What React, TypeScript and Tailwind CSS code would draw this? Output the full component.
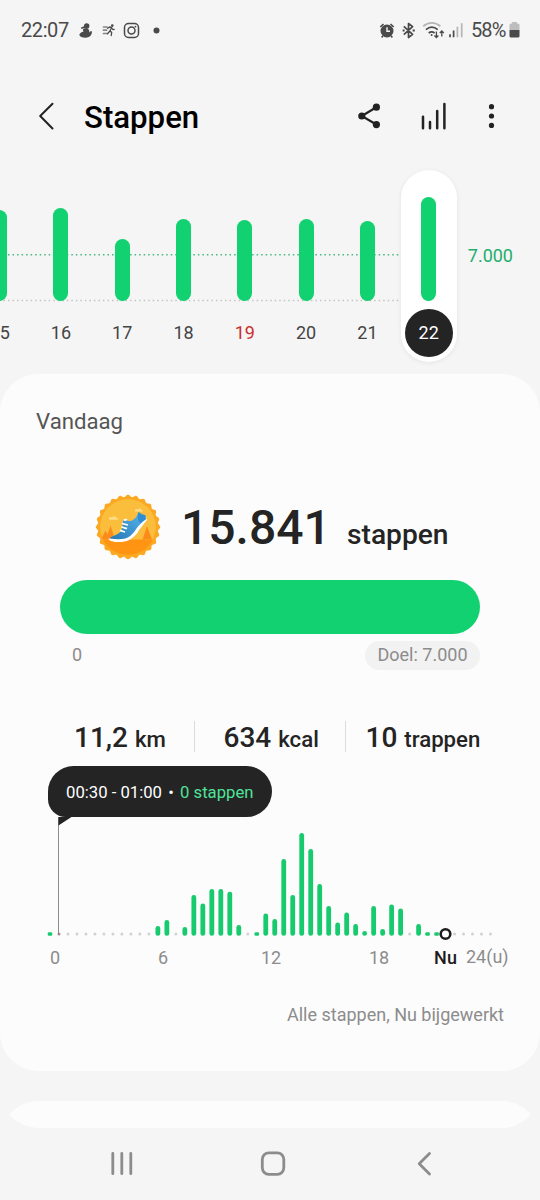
import React from "react";

const days = [
  { d: "15", top: 210 },
  { d: "16", top: 208 },
  { d: "17", top: 238.5 },
  { d: "18", top: 218.5 },
  { d: "19", top: 220, red: true },
  { d: "20", top: 218.5 },
  { d: "21", top: 221 },
  { d: "22", top: 197, active: true },
];

const BASE = 935.8;
const halfHours: Record<number, number> = {
  12: 926, 13: 920, 15: 927, 16: 895, 17: 903.5, 18: 889, 19: 889, 20: 891.7, 21: 925,
  24: 913.5, 25: 919, 26: 859, 27: 895, 28: 833, 29: 849, 30: 884, 31: 906, 32: 922.5,
  33: 912.5, 34: 924, 35: 931, 36: 906, 37: 929, 38: 904.5, 39: 908.5, 41: 924,
};
const tiny = [0, 23, 42, 43];

function StatusBar() {
  return (
    <div className="flex h-[60px] shrink-0 items-center justify-between pl-[21px] pr-5 text-[20px] text-[#4a4a4a]">
      <div className="flex items-center">
        <span className="w-[53px] tracking-[-0.4px]">22:07</span>
        <svg width="90" height="28" viewBox="74 16 90 28" fill="#4a4a4a">
          <circle cx="86.7" cy="26" r="2.7" />
          <path d="M80.800 27.800l3.600-1.900 1.400 1.600-4.300 1.500z" />
          <path d="M83.800 28.600c3.600-1 5.800.6 5.600 3.900l1.400-1.600 1.200.7c-.2 4.200-2.800 6.100-6.400 6.100-3.600 0-5.900-1-6.300-2.900.5-1.600 2-2.400 4.300-3.200-.9-1.200-.9-2.200.2-3z" />
          <g stroke="#4a4a4a" fill="none" strokeWidth="1.300" strokeLinecap="round" strokeLinejoin="round">
            <path d="M103.500 27h3.500M103.500 30.200h3M103.500 33.500h3.500" strokeWidth="1.700" opacity=".65" />
            <path d="M107.500 28.300l2-1.300 2.200.5-1.800 3.300 1.800 1.700-.5 3M109.500 31.500l-2 2.300M111.700 28l1 1.500 1.500-.2" />
            <circle cx="112.300" cy="25.600" r=".7" fill="#4a4a4a" />
            <rect x="124.500" y="23.500" width="14" height="14" rx="4" strokeWidth="1.500" />
            <circle cx="131.500" cy="30.500" r="3.500" strokeWidth="1.500" />
          </g>
          <circle cx="135.500" cy="26.600" r=".9" />
          <circle cx="156.500" cy="30.500" r="3" />
        </svg>
      </div>
      <div className="flex items-center">
        <svg width="93" height="28" viewBox="378 16 93 28" fill="none" stroke="#4a4a4a">
          <circle cx="387" cy="31" r="6.500" fill="#4a4a4a" stroke="none" />
          <path d="M380.300 27l3.200-3M393.700 27l-3.200-3M383 36l-1.400 1.400M391 36l1.400 1.400" strokeWidth="1.700" />
          <path d="M387 27.300v4h3" stroke="#f5f5f5" strokeWidth="1.400" />
          <path d="M403.800 26.300l8.800 8-4.100 3.200V23.500l4.100 3.200-8.800 8" strokeWidth="1.700" strokeLinejoin="round" />
          <path d="M402.600 30.500h2M412.600 30.500h2.200" strokeWidth="1.800" />
          <path d="M423.200 26.200c5.200-4.400 12-4.400 17.200 0" stroke="#b5b5b5" strokeWidth="1.800" />
          <path d="M425.900 29.600c3.700-3.200 8.100-3.200 11.800 0M428.700 33c1.900-1.600 4-1.600 5.900 0" strokeWidth="1.700" />
          <circle cx="431.600" cy="35" r="1" fill="#4a4a4a" stroke="none" />
          <path d="M436.400 31.500v6m-2-2l2 2 2-2M441.800 36.500v-5.500m-2 2l2-2 2 2" strokeWidth="1.300" />
          <path d="M450 34.300v3M453.600 30.600v6.700" strokeWidth="1.700" />
          <path d="M457.400 26.700v10.600M461.700 23.300v14" stroke="#b5b5b5" strokeWidth="1.700" />
        </svg>
        <span className="w-[38px] tracking-[-0.9px]">58%</span>
        <svg width="11" height="16" viewBox="0 0 11 16">
          <path d="M3.200 0h4.600v1.500H9A1.500 1.500 0 0 1 10.500 3v5H.5V3A1.500 1.500 0 0 1 2 1.500h1.200z" fill="#bdbdbd" />
          <path d="M.5 8h10v6A1.500 1.500 0 0 1 9 15.500H2A1.500 1.500 0 0 1 .5 14z" fill="#4a4a4a" />
        </svg>
      </div>
    </div>
  );
}

function Header() {
  return (
    <div className="flex h-[110px] shrink-0 items-center justify-between pl-[38px] pr-[44px] text-black">
      <div className="flex items-center">
        <svg width="16" height="28" viewBox="0 0 16 28" className="mt-[2px]" fill="none" stroke="#222" strokeWidth="2" strokeLinecap="round" strokeLinejoin="round">
          <path d="M14.500 1.800L2.200 14l12.300 12.500" />
        </svg>
        <h1 className="ml-[30px] mt-[5px] text-[31.200px] font-medium leading-[36px]">Stappen</h1>
      </div>
      <svg width="140" height="30" viewBox="356 101 140 30" className="mt-[2px]" fill="#222" stroke="#222">
        <path d="M376.300 107.300L361.800 116l14.500 8.500" fill="none" strokeWidth="2.200" />
        <g stroke="none">
          <circle cx="361.800" cy="116" r="3.600" />
          <circle cx="376.400" cy="107.200" r="3.600" />
          <circle cx="376.400" cy="124.600" r="3.600" />
          <circle cx="491.500" cy="106.700" r="2.600" />
          <circle cx="491.500" cy="116" r="2.600" />
          <circle cx="491.500" cy="125.400" r="2.600" />
        </g>
        <path d="M423 116.700v11.600M430 122v6.300M437.200 111v17.300M444.400 104v24.300" strokeWidth="2.500" strokeLinecap="round" />
      </svg>
    </div>
  );
}

function DayChart() {
  return (
    <div className="relative h-[204px] w-[540px] shrink-0">
      <svg className="absolute left-0 top-0" width="402" height="204" viewBox="0 170 402 204">
        <path d="M-1 254.700H402" stroke="#48b884" strokeWidth="1.500" strokeDasharray="1.500 3.020" />
        <path d="M-1 300.500H402" stroke="#c4c4c4" strokeWidth="1.300" strokeDasharray="1.500 3.020" />
      </svg>
      <div className="relative -ml-[31px] flex">
        {days.map((x) => (
          <div key={x.d} className="flex w-[61.300px] shrink-0 flex-col items-center">
            <div
              className={
                x.active
                  ? "flex h-[192px] w-[56px] flex-col items-center rounded-full bg-white shadow-[0_1px_5px_rgba(0,0,0,0.07)]"
                  : "flex h-[192px] w-[56px] flex-col items-center"
              }
            >
              <div className="flex h-[130.700px] items-end">
                <div className="w-[15px] rounded-full bg-[#12d170]" style={{ height: 300.700 - x.top }} />
              </div>
              <div
                className={
                  x.active
                    ? "mt-[8px] flex h-[48px] w-[48px] items-center justify-center rounded-full bg-[#242424] text-[18px] text-white"
                    : x.red
                      ? "mt-[8px] flex h-[48px] w-[48px] items-center justify-center text-[18px] text-[#c9302c]"
                      : "mt-[8px] flex h-[48px] w-[48px] items-center justify-center text-[18px] text-[#444]"
                }
              >
                {x.d}
              </div>
            </div>
          </div>
        ))}
        <span className="mt-[75px] ml-[8.400px] text-[18px] leading-[22px] text-[#22ad6c]">7.000</span>
      </div>
    </div>
  );
}

function Badge() {
  const pts: string[] = [];
  const n = 24;
  for (let i = 0; i < n * 8; i++) {
    const a = (i / (n * 8)) * Math.PI * 2 - Math.PI / 2;
    const r = 31.200 + 1.100 * Math.cos((i / 8) * Math.PI * 2);
    pts.push(`${(33 + r * Math.cos(a)).toFixed(2)},${(33 + r * Math.sin(a)).toFixed(2)}`);
  }
  return (
    <svg width="66" height="66" viewBox="0 0 66 66">
      <defs>
        <clipPath id="disc"><circle cx="33" cy="33" r="28" /></clipPath>
        <linearGradient id="shoe" x1="0" y1="1" x2="1" y2="0">
          <stop offset="0" stopColor="#2577b5" />
          <stop offset="1" stopColor="#5ab8f0" />
        </linearGradient>
      </defs>
      <polygon points={pts.join(" ")} fill="#fba822" />
      <g clipPath="url(#disc)">
        <circle cx="33" cy="33" r="28" fill="#fbbd3c" />
        <path d="M0 45.500h66V66H0z" fill="#ff9312" />
        <path d="M10.500 36.500l4.500 9H6zM15.500 31.500l4.500 14h-9zM52 32l5 13.500H47.500z" fill="#fb8c1c" />
        <path d="M14 25c-.6-2 2.200-2.800 3-1.200.9-2.500 4-2 4.300.2 1.900-.3 2.400 1.600 1.600 1.800H14zM40 16.500c.3-1.900 2.400-1.700 2.900-.7 1-2 3.600-1.400 3.700.5 1.300 0 1.700 1.200 1 1.300H40z" fill="#ffdc84" />
      </g>
      <path d="M13.500 44.500c.5 2.800 6 4 13.500 3.500 7-.5 12-4.500 15.500-9.200 2-3.200 4-6 9.300-12.500l-.8-3.500-8 6-9 9.500-8 6z" fill="#fff" />
      <path d="M14.500 44.200c2-2.300 9-3.500 11.200-6.700 2-3 1.500-8 2.800-11.800l2.700-1c.8 2.500 3.100 3 5.800 1.800 3.500-1.500 5.500-5 6.500-8.500 2.300 2.200 4.500 2.500 6.700 3l.8 4.300c-4 3-7 6-9.500 9.200-3.500 5.200-7 9.500-12.500 10.300-4.500.7-9.500.5-14.500-.6z" fill="url(#shoe)" />
      <path d="M43.500 18c2.300 2.200 4.500 2.500 6.700 3l.7 4-5.600 4c-2.700-1.600-3.200-6.500-1.800-11z" fill="#2f8ecf" />
      <path d="M27 29.500l6 1.500M26.500 33l5.500 1.700M25 36.300l5 1.700M28.700 26l3.500-.3" stroke="#fff" strokeWidth="1.800" />
    </svg>
  );
}

function Stat({ n, u }: { n: string; u: string }) {
  return (
    <div className="mt-[4px] flex items-baseline gap-[7px] whitespace-nowrap font-medium text-[#242424]">
      <span className="text-[28px] leading-[34px]">{n}</span>
      <span className="text-[22.200px] leading-[34px]">{u}</span>
    </div>
  );
}

function HourChart() {
  return (
    <svg className="block" width="540" height="130" viewBox="0 817 540 130">
      {Array.from({ length: 50 }, (_, i) => {
        const x = 50 + i * 8.990;
        if (halfHours[i])
          return <rect key={i} x={x - 2.400} y={halfHours[i]} width="4.800" height={BASE - halfHours[i]} rx="2.400" fill="#17ca6e" />;
        if (tiny.includes(i)) return <rect key={i} x={x - 2.300} y="932.300" width="4.600" height="3.400" rx="1.300" fill="#17ca6e" />;
        return <circle key={i} cx={x} cy="934" r="1.500" fill={i === 1 ? "#b08c8c" : "#d2d2d2"} />;
      })}
      <path d="M58.500 817v118" stroke="#8c8c8c" strokeWidth="1" />
      <path d="M58.500 816h14.500l-14.500 9.500z" fill="#242424" />
      <circle cx="445.500" cy="934" r="4.800" fill="#fff" stroke="#1d1d1d" strokeWidth="2.600" />
    </svg>
  );
}

function TodayCard() {
  return (
    <section className="h-[697px] shrink-0 rounded-[38px] bg-[#fcfcfc]">
      <h2 className="pl-9 pt-[34px] text-[22.200px] leading-[26px] text-[#555]">Vandaag</h2>
      <div className="mt-[60px] flex h-[66px] pl-[95px]">
        <Badge />
        <div className="ml-[20px] mt-px flex items-baseline font-medium text-[#242424]">
          <span className="w-[166px] text-[48px] leading-[66px]">15.841</span>
          <span className="text-[28.200px]">stappen</span>
        </div>
      </div>
      <div className="mx-[60px] mt-[20px] h-[54px] rounded-full bg-[#12d170]" />
      <div className="mx-[60px] mt-[7px] flex items-start justify-between text-[18px] leading-[28px] text-[#8c8c8c]">
        <span className="pl-3">0</span>
        <span className="h-[29px] w-[115px] rounded-full bg-[#f2f2f2] text-center">Doel: 7.000</span>
      </div>
      <div className="mt-[50px] flex h-[32px] items-center pl-[74px]">
        <div className="w-[120px]"><Stat n="11,2" u="km" /></div>
        <div className="h-[31px] w-px bg-[#dcdcdc]" />
        <div className="w-[150px] pl-[28.500px]"><Stat n="634" u="kcal" /></div>
        <div className="h-[31px] w-px bg-[#dcdcdc]" />
        <div className="pl-[19.500px]"><Stat n="10" u="trappen" /></div>
      </div>
      <div className="ml-[48px] mt-[14px] flex h-[51px] w-[223.500px] items-center whitespace-nowrap rounded-[26px] rounded-bl-[18px] bg-[#242424] pl-[18px] pt-[3px] text-[16.700px] text-white">
        <span>00:30 - 01:00</span>
        <span className="w-[18px] text-center">•</span>
        <span className="text-[#4fe39a]">0 stappen</span>
      </div>
      <HourChart />
      <div className="flex h-[22px] text-[18px] leading-[22px] text-[#8c8c8c]">
        <span className="w-[110px] text-center">0</span>
        <span className="w-[106px] text-center">6</span>
        <span className="w-[110px] text-center">12</span>
        <span className="w-[106px] text-center">18</span>
        <span className="w-[27px] text-center font-medium text-[#1d1d1d]">Nu</span>
        <span className="-mt-px pl-[7px]">24(u)</span>
      </div>
      <p className="mt-[35px] pr-[36px] text-right text-[18px] leading-[22px] text-[#8c8c8c]">Alle stappen, Nu bijgewerkt</p>
    </section>
  );
}

function NavBar() {
  return (
    <svg className="block" width="540" height="72" viewBox="0 1128 540 72" fill="none" stroke="#8c8c8c" strokeWidth="2.800" strokeLinecap="round" strokeLinejoin="round">
      <path d="M112.800 1153.500v20.200M121.800 1153.500v20.200M130.800 1153.500v20.200" />
      <rect x="262.300" y="1152.800" width="21.500" height="21.500" rx="6.500" />
      <path d="M429.500 1153.500l-10.300 10.200 10.300 10.200" />
    </svg>
  );
}

export default function App() {
  return (
    <div className="h-[1200px] w-[540px] overflow-hidden bg-[#f5f5f5] font-['Roboto',sans-serif]">
      <div className="flex h-[1128px] flex-col overflow-hidden rounded-b-[38px]">
        <StatusBar />
        <Header />
        <DayChart />
        <TodayCard />
        <div className="mt-[30px] h-[120px] shrink-0 rounded-t-[38px] bg-[#fcfcfc]" />
      </div>
      <NavBar />
    </div>
  );
}
